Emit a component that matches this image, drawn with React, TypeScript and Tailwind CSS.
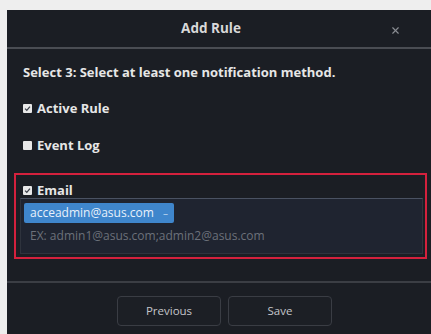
import React from "react";
import { X } from "lucide-react";

function Box({ checked }: { checked: boolean }) {
  return (
    <span className="inline-flex items-center justify-center w-[9px] h-[9px] bg-[#e8e8e8] rounded-[1px] mr-[5px]">
      {checked && (
        <svg width="7" height="7" viewBox="0 0 8 8">
          <path d="M1.2 4.2 L3.2 6.2 L6.8 1.8" stroke="#3a3f48" strokeWidth="1.4" fill="none" />
        </svg>
      )}
    </span>
  );
}

export default function App() {
  return (
    <div
      className="w-[431px] h-[334px] bg-[#eeeeee] pt-[10px] pl-[7px] overflow-hidden"
      style={{ fontFamily: '"Open Sans", "Liberation Sans", sans-serif' }}
    >
      <div className="h-[324px] bg-[#1b1e24] flex flex-col text-[#e6e6e6]">
        {/* Header */}
        <div className="h-[37px] flex items-center justify-center relative pr-[16px]">
          <span className="text-[13.5px] font-bold text-[#d8d8d8]">Add Rule</span>
          <X size={11} className="absolute right-[30px] top-[15px] text-[#8a8d93]" strokeWidth={2.5} />
        </div>
        <div className="h-[2px] bg-[#4a4d53]" />

        {/* Content */}
        <div className="pt-[15px] px-[16px]">
          <div className="text-[13px] leading-[16px] font-bold">
            Select 3: Select at least one notification method.
          </div>
          <div className="mt-[20px] flex items-center text-[13px] leading-[16px] font-bold">
            <Box checked />
            Active Rule
          </div>
          <div className="mt-[21px] flex items-center text-[13px] leading-[16px] font-bold">
            <Box checked={false} />
            Event Log
          </div>
        </div>

        {/* Email */}
        <div className="mt-[20px] ml-[7px] mr-[4px] border-2 border-[#d4213d] pt-[7px] pb-[3px] pl-[4px] pr-[2px]">
          <div className="pl-[3px] flex items-center text-[13px] leading-[16px] font-bold">
            <Box checked />
            Email
          </div>
          <div className="h-[56px] bg-[#1f2430] border border-[#2e333d] border-t-[#4a5262] px-[3px] pt-[4px]">
            <div className="w-[150px] h-[20px] bg-[#3f86cc] rounded-[2px] flex items-center justify-between pl-[6px] pr-[6px]">
              <span className="text-[12px] text-[#e8f1fb]">acceadmin@asus.com</span>
              <span className="text-[10px] text-[#b9d3ee]">–</span>
            </div>
            <div className="mt-[5px] pl-[6px] text-[12px] leading-[16px] text-[#6c717a]">
              EX: admin1@asus.com;admin2@asus.com
            </div>
          </div>
        </div>

        {/* Footer */}
        <div className="mt-[22px] h-[2px] bg-[#3b3e44]" />
        <div className="flex justify-center gap-[7px] pt-[13px] pl-[11px]">
          <button className="w-[104px] h-[30px] border border-[#3a3d44] rounded-[4px] bg-[#1c1f25] text-[11.5px] text-[#c4c6ca]">
            Previous
          </button>
          <button className="w-[104px] h-[30px] border border-[#3a3d44] rounded-[4px] bg-[#1c1f25] text-[11.5px] text-[#c4c6ca]">
            Save
          </button>
        </div>
      </div>
    </div>
  );
}
